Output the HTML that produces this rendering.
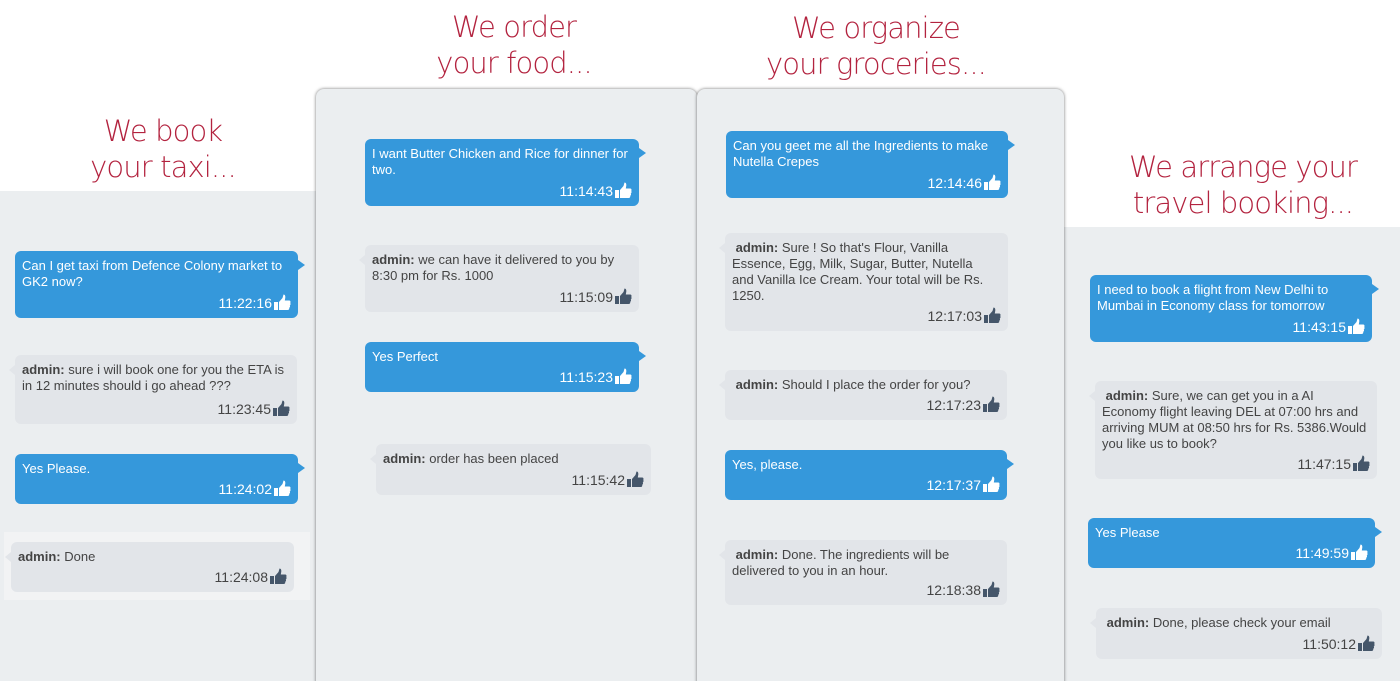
<!DOCTYPE html>
<html><head><meta charset="utf-8"><style>
*{margin:0;padding:0;box-sizing:border-box}
html,body{width:1400px;height:681px;overflow:hidden}
body{background:#fff;position:relative;font-family:"Liberation Sans",Arial,sans-serif}
.bg{position:absolute;background:#ebeef0}
.card{position:absolute;background:#ebeef0;border-radius:8px;box-shadow:0 0 3px rgba(0,0,0,.55)}
.t{position:absolute;color:#b3233f;font-family:"DejaVu Sans",sans-serif;font-size:29px;letter-spacing:-0.9px;line-height:36px;text-align:center;font-weight:200;white-space:nowrap;transform:translateX(-50%)}
.b{position:absolute;border-radius:6px;font-size:13px;line-height:16px;padding:7px 7px 0 7px;white-space:nowrap}
.u{background:#3598db;color:#fff}
.a{background:#e2e5e9;color:#444}
.u:after{content:"";position:absolute;right:-7px;top:9px;border-left:7px solid #3598db;border-top:5px solid transparent;border-bottom:5px solid transparent}
.a:before{content:"";position:absolute;left:-6px;top:10px;border-right:6px solid #e2e5e9;border-top:5px solid transparent;border-bottom:5px solid transparent}
.a b{color:#444;font-weight:bold}
.tm{position:absolute;right:7px;bottom:7px;font-size:14px;line-height:16px;display:flex;align-items:center}
.tm svg{margin-left:2px;width:17px;height:17px}
</style></head><body>
<div class="bg" style="left:0;top:191px;width:330px;height:490px"></div>
<div style="position:absolute;left:4px;top:532px;width:306px;height:68px;background:#f2f3f4"></div>
<div class="bg" style="left:1064px;top:227px;width:336px;height:454px"></div>
<div class="card" style="left:316px;top:89px;width:381px;height:600px"></div>
<div class="card" style="left:697px;top:89px;width:367px;height:600px"></div>

<div class="t" style="left:163px;top:113px">We book<br>your taxi...</div>
<div class="t" style="left:514px;top:9px">We order<br>your food...</div>
<div class="t" style="left:876px;top:10px">We organize<br>your groceries...</div>
<div class="t" style="left:1243px;top:149px">We arrange your<br>travel booking...</div>

<svg width="0" height="0" style="position:absolute"><defs><symbol id="th" viewBox="0 0 17 17"><rect x="0" y="8" width="4" height="8"/><path d="M5 8 L8.5 4 L9.5 0.5 Q11.5 0.5 11.3 3.5 L10.8 6.5 L15.5 6.5 Q17 7 16.3 9 Q17 10.5 15.8 11.5 Q16.5 13 15.2 13.8 Q15.6 16 13.5 16 L5 16 Z"/></symbol></defs></svg>

<div class="b u" style="left:15px;top:251px;width:283px;height:67px">Can I get taxi from Defence Colony market to<br>GK2 now?<div class="tm">11:22:16<svg fill="#fff"><use href="#th"/></svg></div></div>
<div class="b a" style="left:15px;top:355px;width:282px;height:69px"><b>admin:</b> sure i will book one for you the ETA is<br>in 12 minutes should i go ahead ???<div class="tm">11:23:45<svg fill="#45566a"><use href="#th"/></svg></div></div>
<div class="b u" style="left:15px;top:454px;width:283px;height:50px">Yes Please.<div class="tm">11:24:02<svg fill="#fff"><use href="#th"/></svg></div></div>
<div class="b a" style="left:11px;top:542px;width:283px;height:50px"><b>admin:</b> Done<div class="tm">11:24:08<svg fill="#45566a"><use href="#th"/></svg></div></div>

<div class="b u" style="left:365px;top:139px;width:274px;height:67px">I want Butter Chicken and Rice for dinner for<br>two.<div class="tm">11:14:43<svg fill="#fff"><use href="#th"/></svg></div></div>
<div class="b a" style="left:365px;top:245px;width:274px;height:67px"><b>admin:</b> we can have it delivered to you by<br>8:30 pm for Rs. 1000<div class="tm">11:15:09<svg fill="#45566a"><use href="#th"/></svg></div></div>
<div class="b u" style="left:365px;top:342px;width:274px;height:50px">Yes Perfect<div class="tm">11:15:23<svg fill="#fff"><use href="#th"/></svg></div></div>
<div class="b a" style="left:376px;top:444px;width:275px;height:51px"><b>admin:</b> order has been placed<div class="tm">11:15:42<svg fill="#45566a"><use href="#th"/></svg></div></div>

<div class="b u" style="left:726px;top:131px;width:282px;height:67px">Can you geet me all the Ingredients to make<br>Nutella Crepes<div class="tm">12:14:46<svg fill="#fff"><use href="#th"/></svg></div></div>
<div class="b a" style="left:725px;top:233px;width:283px;height:98px">&nbsp;<b>admin:</b> Sure ! So that's Flour, Vanilla<br>Essence, Egg, Milk, Sugar, Butter, Nutella<br>and Vanilla Ice Cream. Your total will be Rs.<br>1250.<div class="tm">12:17:03<svg fill="#45566a"><use href="#th"/></svg></div></div>
<div class="b a" style="left:725px;top:370px;width:282px;height:50px">&nbsp;<b>admin:</b> Should I place the order for you?<div class="tm">12:17:23<svg fill="#45566a"><use href="#th"/></svg></div></div>
<div class="b u" style="left:725px;top:450px;width:282px;height:50px">Yes, please.<div class="tm">12:17:37<svg fill="#fff"><use href="#th"/></svg></div></div>
<div class="b a" style="left:725px;top:540px;width:282px;height:65px">&nbsp;<b>admin:</b> Done. The ingredients will be<br>delivered to you in an hour.<div class="tm">12:18:38<svg fill="#45566a"><use href="#th"/></svg></div></div>

<div class="b u" style="left:1090px;top:275px;width:282px;height:67px">I need to book a flight from New Delhi to<br>Mumbai in Economy class for tomorrow<div class="tm">11:43:15<svg fill="#fff"><use href="#th"/></svg></div></div>
<div class="b a" style="left:1095px;top:381px;width:282px;height:98px">&nbsp;<b>admin:</b> Sure, we can get you in a AI<br>Economy flight leaving DEL at 07:00 hrs and<br>arriving MUM at 08:50 hrs for Rs. 5386.Would<br>you like us to book?<div class="tm">11:47:15<svg fill="#45566a"><use href="#th"/></svg></div></div>
<div class="b u" style="left:1088px;top:518px;width:287px;height:50px">Yes Please<div class="tm">11:49:59<svg fill="#fff"><use href="#th"/></svg></div></div>
<div class="b a" style="left:1096px;top:608px;width:286px;height:51px">&nbsp;<b>admin:</b> Done, please check your email<div class="tm">11:50:12<svg fill="#45566a"><use href="#th"/></svg></div></div>
</body></html>
